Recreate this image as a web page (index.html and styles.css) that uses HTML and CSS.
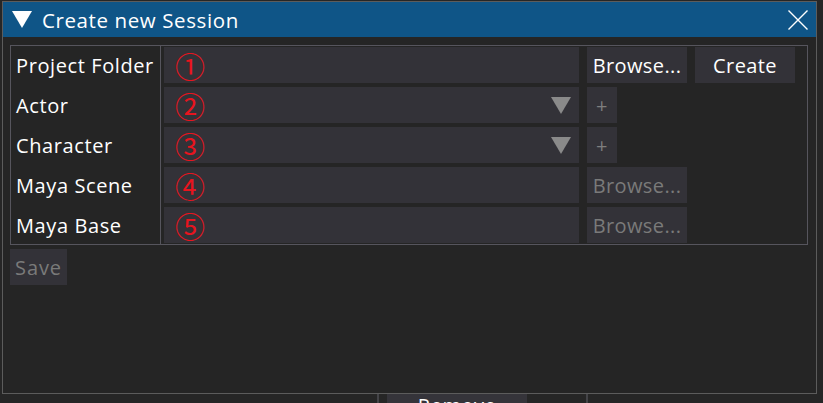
FILE: index.html
```html
<!DOCTYPE html>
<html>
<head>
<meta charset="utf-8">
<link rel="stylesheet" href="styles.css">
</head>
<body>
<div class="desktop">
  <div class="behind-line behind-line-a"></div>
  <div class="behind-line behind-line-b"></div>
  <div class="behind-btn">Remove</div>

  <div class="window">
    <div class="titlebar">
      <span class="collapse"></span>
      <span class="title">Create new Session</span>
      <svg class="close" width="22" height="22" viewBox="0 0 22 22">
        <path d="M1.5 1.5 L20.5 20.5 M20.5 1.5 L1.5 20.5" stroke="#ffffff" stroke-width="1.4" fill="none"/>
      </svg>
    </div>
    <div class="content">
      <div class="table">
        <div class="label">Project Folder</div>
        <div class="cell">
          <div class="input"><span class="num">①</span></div>
          <div class="btn">Browse...</div>
          <div class="btn">Create</div>
        </div>

        <div class="label">Actor</div>
        <div class="cell">
          <div class="input combo"><span class="num">②</span><span class="arrow"></span></div>
          <div class="btn plus">+</div>
        </div>

        <div class="label">Character</div>
        <div class="cell">
          <div class="input combo"><span class="num">③</span><span class="arrow"></span></div>
          <div class="btn plus">+</div>
        </div>

        <div class="label">Maya Scene</div>
        <div class="cell">
          <div class="input"><span class="num">④</span></div>
          <div class="btn disabled">Browse...</div>
        </div>

        <div class="label">Maya Base</div>
        <div class="cell">
          <div class="input"><span class="num">⑤</span></div>
          <div class="btn disabled">Browse...</div>
        </div>
      </div>
      <div class="save">Save</div>
    </div>
  </div>
</div>
</body>
</html>
```
FILE: styles.css
```css
html, body {
  margin: 0;
  padding: 0;
}
body {
  background: #1e1e1e;
  width: 823px;
  height: 403px;
  overflow: hidden;
  font-family: "Open Sans", "Noto Sans", sans-serif;
  color: #ffffff;
}
.desktop {
  position: relative;
  width: 823px;
  height: 403px;
  overflow: hidden;
  background: #262626;
}
.behind-line {
  position: absolute;
  top: 394px;
  width: 2px;
  height: 9px;
  background: #444448;
}
.behind-line-a { left: 377px; }
.behind-line-b { left: 586px; }
.behind-btn {
  position: absolute;
  left: 387px;
  top: 394px;
  width: 140px;
  height: 9px;
  overflow: hidden;
  background: #35343a;
  color: #ffffff;
  font-size: 20px;
  line-height: 24px;
  letter-spacing: 0.5px;
  text-align: center;
}
.window {
  position: absolute;
  left: 2px;
  top: 1px;
  width: 813px;
  height: 391px;
  border: 1px solid #5c5c5c;
  background: #252525;
}
.titlebar {
  height: 35px;
  background: #0f5587;
  display: flex;
  align-items: center;
  position: relative;
}
.collapse {
  width: 0;
  height: 0;
  margin-left: 9px;
  border-left: 10px solid transparent;
  border-right: 10px solid transparent;
  border-top: 17px solid #ffffff;
}
.title {
  margin-left: 10px;
  font-size: 20.5px;
  letter-spacing: 0.6px;
  color: #ffffff;
}
.close {
  position: absolute;
  left: 784px;
  top: 7px;
}
.content {
  padding: 8px 0 0 7px;
}
.table {
  width: 796px;
  border: 1px solid #56555d;
  padding: 1px 0;
  display: grid;
  grid-template-columns: 150px 1fr;
  grid-auto-rows: 36px;
  row-gap: 4px;
  background: linear-gradient(#56555d, #56555d) no-repeat 149px 0 / 1px 100%;
}
.label {
  padding-left: 5px;
  font-size: 20px;
  letter-spacing: 0.6px;
  display: flex;
  align-items: center;
  color: #ffffff;
}
.cell {
  display: flex;
  gap: 8px;
  padding-left: 3px;
}
.input {
  width: 415px;
  height: 36px;
  background: #333238;
  position: relative;
  display: flex;
  align-items: center;
}
.num {
  margin-left: 11px;
  color: #e8141e;
  font-family: "Noto Sans CJK JP", sans-serif;
  font-size: 30px;
  line-height: 30px;
  height: 30px;
}
.combo .arrow {
  position: absolute;
  right: 8px;
  top: 10px;
  width: 0;
  height: 0;
  border-left: 10px solid transparent;
  border-right: 10px solid transparent;
  border-top: 17px solid #8a8a8a;
}
.btn {
  width: 100px;
  height: 36px;
  background: #333238;
  font-size: 20px;
  letter-spacing: 0.4px;
  display: flex;
  align-items: center;
  justify-content: center;
  color: #ffffff;
}
.btn.plus {
  width: 30px;
  color: #7e7e7e;
  font-size: 20px;
}
.btn.disabled {
  color: #7a7a7a;
}
.save {
  margin-top: 4px;
  width: 57px;
  height: 36px;
  background: #333238;
  color: #7a7a7a;
  font-size: 20px;
  letter-spacing: 0.9px;
  display: flex;
  align-items: center;
  justify-content: center;
}
```
